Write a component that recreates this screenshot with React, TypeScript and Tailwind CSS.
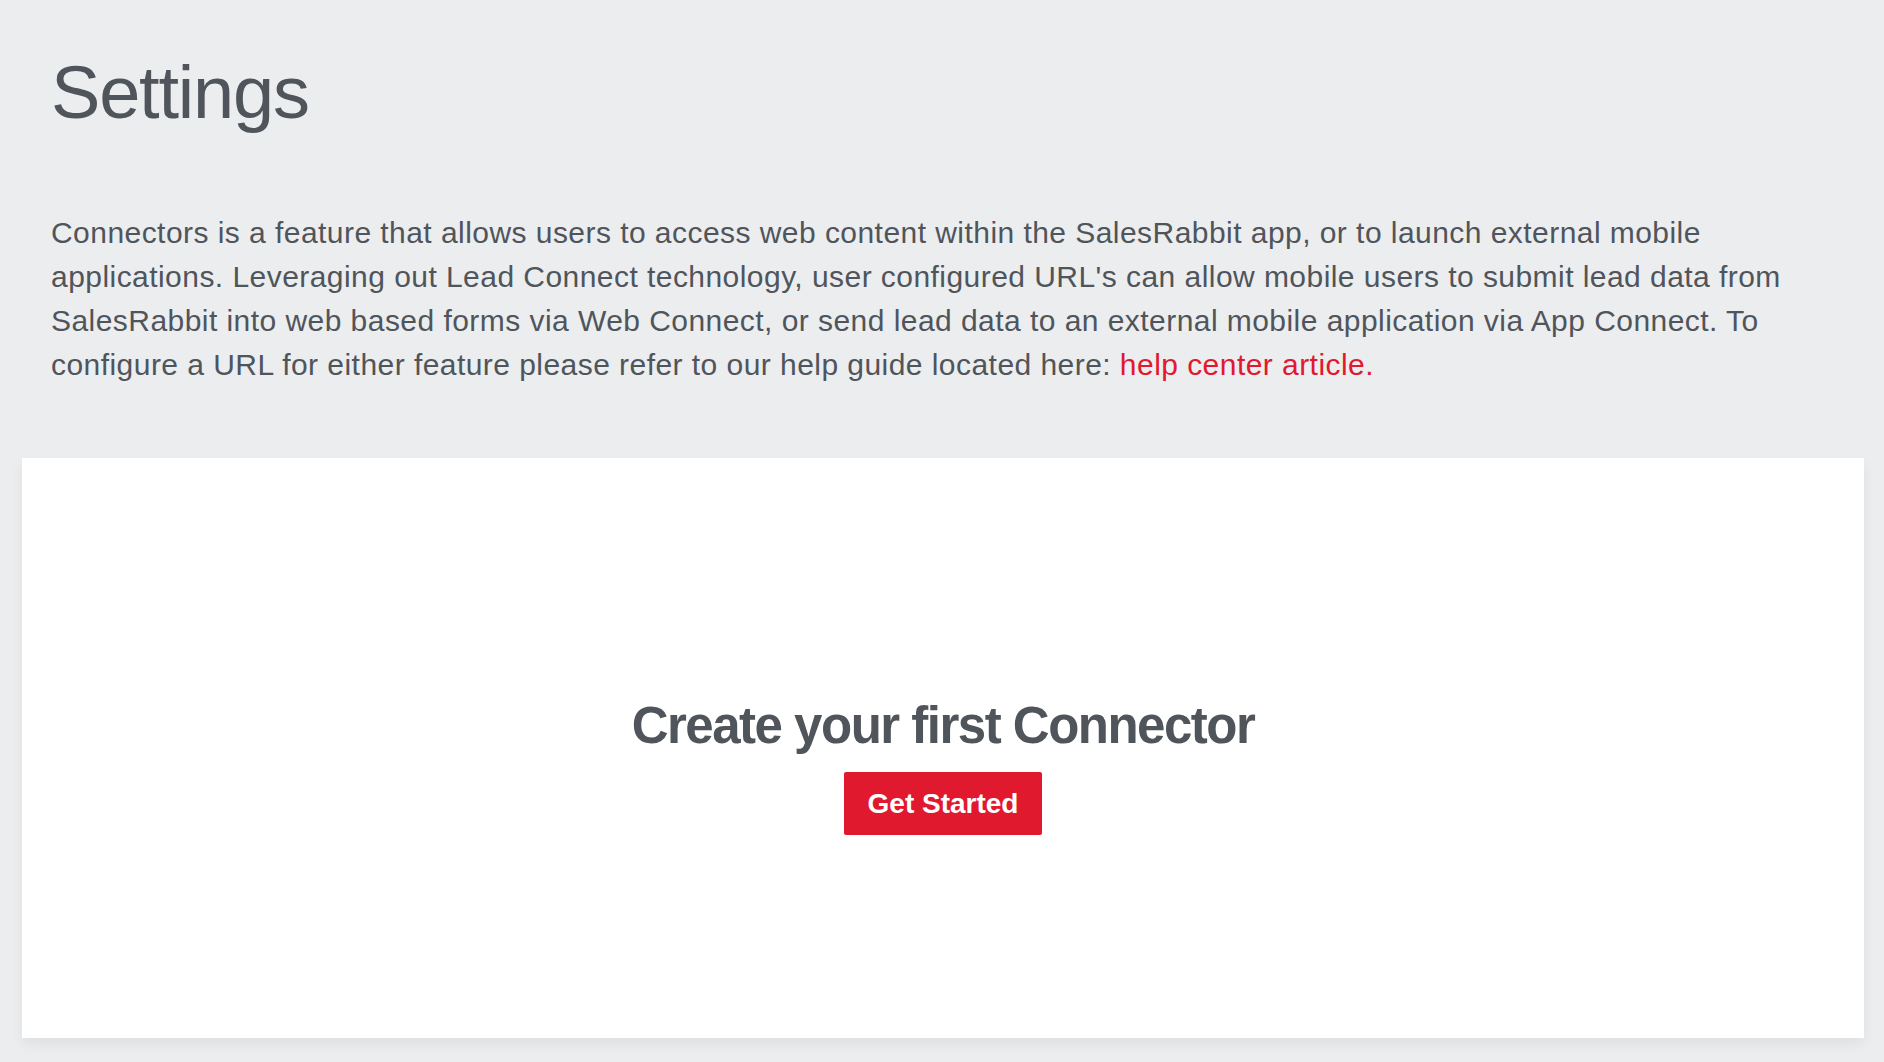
import React from "react";

export default function App() {
  return (
    <div
      className="min-h-[1062px] w-full bg-[#ecedef] text-[#4f555b]"
      style={{ fontFamily: '"Liberation Sans", Arial, Helvetica, sans-serif' }}
    >
      <div className="px-[51px] pt-[56px]">
        <h1 className="text-[74px] leading-[74px] font-normal tracking-[-1.2px]">Settings</h1>
        <p className="mt-[81px] text-[30px] leading-[44px] tracking-[0.45px]">
          Connectors is a feature that allows users to access web content within the SalesRabbit app, or to launch
          external mobile applications. Leveraging out Lead Connect technology, user configured URL's can allow mobile
          users to submit lead data from SalesRabbit into web based forms via Web Connect, or send lead data to an
          external mobile application via App Connect. To configure a URL for either feature please refer to our help
          guide located here:{" "}
          <a href="#" className="text-[#e1192e]">
            help center article.
          </a>
        </p>
      </div>
      <div className="pl-[22px] pr-[20px] pt-[71px] pb-[24px]">
        <div className="flex h-[580px] flex-col items-center bg-white pt-[237px] shadow-[0_6px_12px_rgba(0,0,0,0.06)]">
          <h2 className="text-[51px] leading-[61px] font-bold tracking-[-1.5px]">Create your first Connector</h2>
          <button className="mt-[16px] flex h-[63px] items-center rounded-[2px] bg-[#e1192e] px-[24px] text-[28px] font-bold text-white">
            Get Started
          </button>
        </div>
      </div>
    </div>
  );
}
